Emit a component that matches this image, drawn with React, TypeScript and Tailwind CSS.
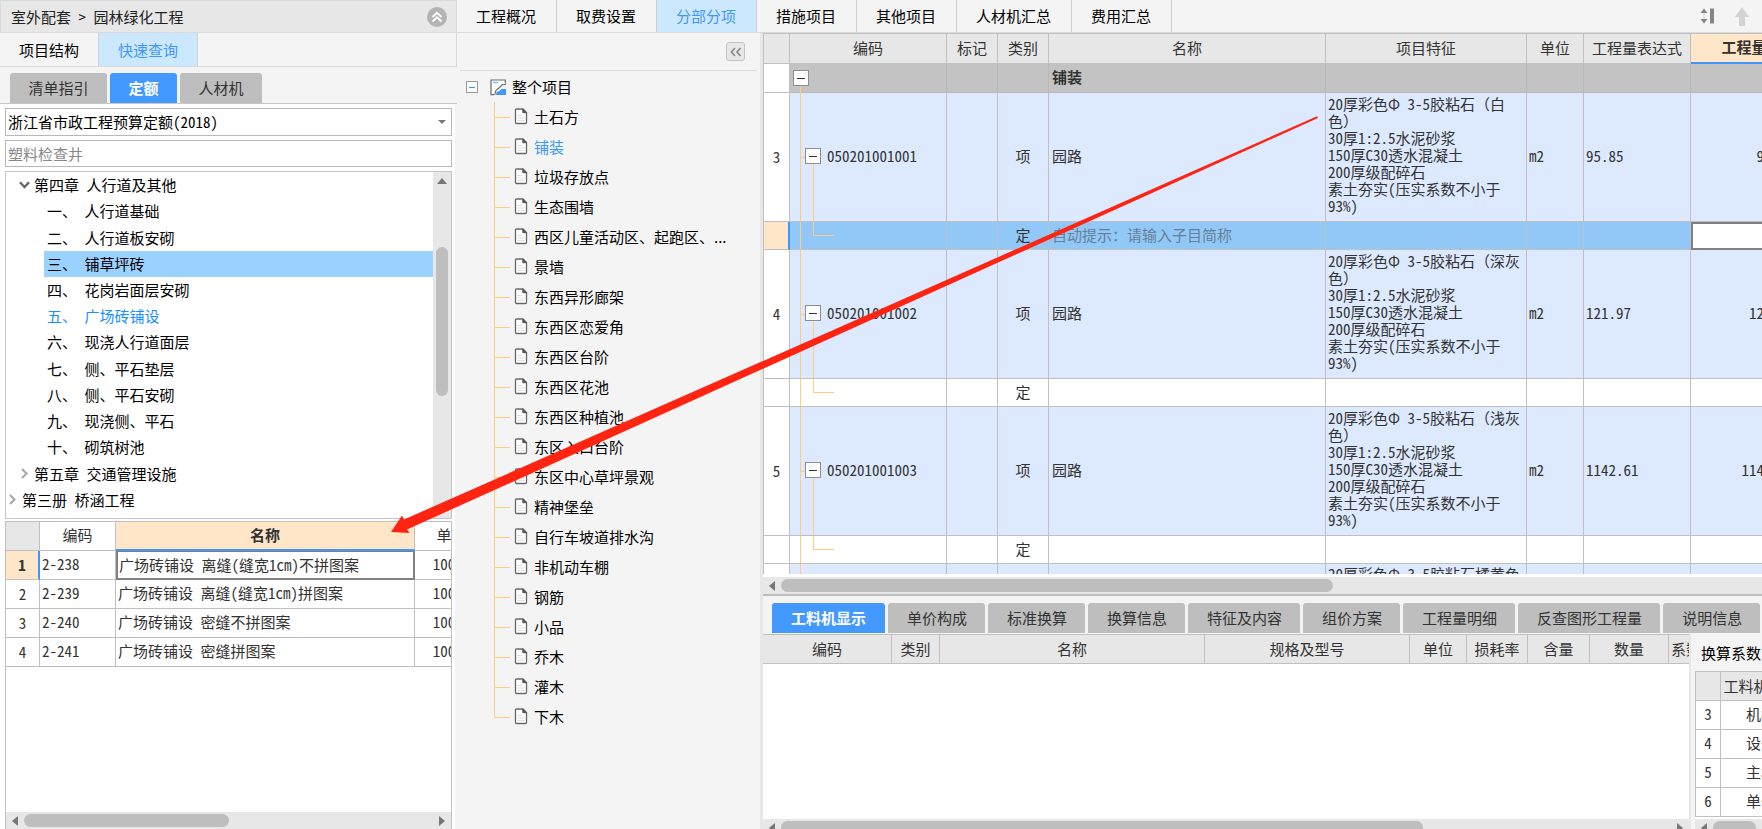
import React from "react";

const LINE = "border-[#c0c0c0]";

/* ---------- data ---------- */

const projectTabs = ["工程概况", "取费设置", "分部分项", "措施项目", "其他项目", "人材机汇总", "费用汇总"];

const chapterItems = [
  "一、 人行道基础",
  "二、 人行道板安砌",
  "三、 铺草坪砖",
  "四、 花岗岩面层安砌",
  "五、 广场砖铺设",
  "六、 现浇人行道面层",
  "七、 侧、平石垫层",
  "八、 侧、平石安砌",
  "九、 现浇侧、平石",
  "十、 砌筑树池",
];

const quotaRows = [
  ["2-238", "广场砖铺设 离缝(缝宽1cm)不拼图案"],
  ["2-239", "广场砖铺设 离缝(缝宽1cm)拼图案"],
  ["2-240", "广场砖铺设 密缝不拼图案"],
  ["2-241", "广场砖铺设 密缝拼图案"],
];

const sections = [
  "土石方", "铺装", "垃圾存放点", "生态围墙", "西区儿童活动区、起跑区、...", "景墙", "东西异形廊架",
  "东西区恋爱角", "东西区台阶", "东西区花池", "东西区种植池", "东区入口台阶", "东区中心草坪景观", "精神堡垒",
  "自行车坡道排水沟", "非机动车棚", "钢筋", "小品", "乔木", "灌木", "下木",
];

const feature = (color: string) =>
  `20厚彩色Φ 3-5胶粘石（${color}色）\n30厚1:2.5水泥砂浆\n150厚C30透水混凝土\n200厚级配碎石\n素土夯实(压实系数不小于93%)`;

const billItems = [
  { no: 3, code: "050201001001", feature: feature("白"), qty: "95.85", hint: true },
  { no: 4, code: "050201001002", feature: feature("深灰"), qty: "121.97", hint: false },
  { no: 5, code: "050201001003", feature: feature("浅灰"), qty: "1142.61", hint: false },
];

const detailTabs = [
  "工料机显示", "单价构成", "标准换算", "换算信息", "特征及内容", "组价方案", "工程量明细", "反查图形工程量", "说明信息",
];

const factorRows = [
  [3, "机械"],
  [4, "设备"],
  [5, "主材"],
  [6, "单价"],
] as const;

/* ---------- small parts ---------- */

function ArrowLeft() {
  return (
    <svg width="6" height="10" viewBox="0 0 6 10" fill="#75757a" aria-hidden="true">
      <path d="M6 0v10L0 5z" />
    </svg>
  );
}

function ArrowRight() {
  return (
    <svg width="6" height="10" viewBox="0 0 6 10" fill="#75757a" aria-hidden="true">
      <path d="M0 0v10l6-5z" />
    </svg>
  );
}

function HScroll({ thumb, right = true }: { thumb: string; right?: boolean }) {
  return (
    <div className="flex h-[17px] shrink-0 items-center gap-[6px] bg-[#e7e7e7] px-[6px]">
      <ArrowLeft />
      <div className="flex min-w-0 flex-1">
        <div className={`h-[13px] rounded-full bg-[#bebebe] ${thumb}`} />
      </div>
      {right && <ArrowRight />}
    </div>
  );
}

function DocIcon() {
  return (
    <svg width="14" height="17" viewBox="0 0 14 17" fill="none" aria-hidden="true">
      <path d="M1.500 2.200Q1.500 1 2.700 1H9L12.500 4.500V14.300Q12.500 15.500 11.300 15.500H2.700Q1.500 15.500 1.500 14.300Z" fill="#fff" stroke="#686868" strokeWidth="1.300" />
      <path d="M8.800 1L12.500 4.700H8.800Z" fill="#555" stroke="#555" />
      <path d="M3.500 7.500H8M3.500 10H10.500M3.500 12.500H10.500" stroke="#dedede" />
    </svg>
  );
}

function ProjectIcon() {
  return (
    <svg width="17" height="17" viewBox="0 0 17 17" fill="none" aria-hidden="true">
      <path d="M1 1H15.500V5L9.500 8L6 11.500L5 16H1Z" fill="#fff" />
      <path d="M15.300 4.500V1H1V15.700H4.500" stroke="#6b6b6b" strokeWidth="1.200" />
      <path d="M3 3.500H8" stroke="#79c3ff" strokeWidth="1.600" />
      <path d="M16 5.500H12.500L9.500 8.500L5.800 11.500L4.800 15.500" stroke="#6b6b6b" strokeWidth="1.100" />
      <path d="M6.500 13L9.500 12L11.500 10H16V16H6Z" fill="#3f97fb" />
    </svg>
  );
}

function Toggle() {
  return (
    <button type="button" aria-label="折叠" className="relative flex size-4 shrink-0 items-center justify-center border border-[#8e8e8e] bg-white">
      <span className="h-px w-2 bg-[#333]" />
    </button>
  );
}

/* ---------- left panel ---------- */

function QuotaTree() {
  const row = "flex w-full items-center text-left";
  return (
    <div className="flex h-[348px] shrink-0 border border-[#c4c4c4] bg-white">
      <ul className="grid min-w-0 flex-1 auto-rows-fr pb-[5px] text-black">
        <li className="flex">
          <button type="button" className={`${row} gap-1 pl-[13px]`}>
            <svg width="11" height="8" viewBox="0 0 11 8" fill="none" stroke="#666" strokeWidth="2.400" aria-hidden="true">
              <path d="M1 1.200L5.500 6L10 1.200" />
            </svg>
            第四章 人行道及其他
          </button>
        </li>
        {chapterItems.map((t, i) => (
          <li key={t} className="flex pl-[38px]">
            <button
              type="button"
              className={`${row} pl-[3px] ${i === 2 ? "bg-[#99d1ff]" : ""} ${i === 4 ? "text-[#1890ff]" : ""}`}
            >
              {t}
            </button>
          </li>
        ))}
        <li className="flex">
          <button type="button" className={`${row} gap-[6px] pl-[15px]`}>
            <svg width="7" height="11" viewBox="0 0 7 11" fill="none" stroke="#aaa" strokeWidth="2.200" aria-hidden="true">
              <path d="M1 1L5.500 5.500L1 10" />
            </svg>
            第五章 交通管理设施
          </button>
        </li>
        <li className="flex">
          <button type="button" className={`${row} gap-[6px] pl-[3px]`}>
            <svg width="7" height="11" viewBox="0 0 7 11" fill="none" stroke="#aaa" strokeWidth="2.200" aria-hidden="true">
              <path d="M1 1L5.500 5.500L1 10" />
            </svg>
            第三册 桥涵工程
          </button>
        </li>
      </ul>
      <div className="flex w-[18px] flex-col items-center bg-[#e7e7e7] pt-[6px]">
        <svg width="10" height="6" viewBox="0 0 10 6" fill="#75757a" aria-hidden="true">
          <path d="M0 6H10L5 0z" />
        </svg>
        <div className="mt-[63px] h-[149px] w-3 rounded-full bg-[#bebebe]" />
      </div>
    </div>
  );
}

function QuotaTable() {
  const cell = `border-r border-b pb-[2px] ${LINE}`;
  return (
    <div className="mt-[2px] flex min-h-0 flex-1 flex-col overflow-hidden border border-b-0 border-[#c0c0c0] bg-white">
      <div className="min-h-0 flex-1 overflow-hidden">
        <table className="w-[483px] table-fixed border-separate border-spacing-0 text-[#333]">
          <colgroup>
            <col className="w-[34px]" />
            <col className="w-[76px]" />
            <col className="w-[299px]" />
            <col className="w-[74px]" />
          </colgroup>
          <thead>
            <tr className="h-[29px]">
              <th className={`${cell} bg-[#e7e7e7]`} />
              <th className={`${cell} font-normal`}>编码</th>
              <th className="border-r border-b-2 border-r-[#c0c0c0] border-b-[#3f97fb] bg-[#ffe6c8] pb-px font-bold">名称</th>
              <th className={`${cell} font-normal`}>单位</th>
            </tr>
          </thead>
          <tbody>
            {quotaRows.map(([code, name], i) => (
              <tr key={code} className="h-[29px]">
                <td
                  className={
                    i === 0
                      ? "border-r-2 border-b border-r-[#3f97fb] border-b-[#c0c0c0] bg-[#ffe6c8] text-center font-bold"
                      : "border-r border-b border-[#c0c0c0] text-center"
                  }
                >
                  {i + 1}
                </td>
                <td className={`${cell} pl-[2px]`}>{code}</td>
                <td className={i === 0 ? "border-2 border-t border-[#808080] pb-px pl-px" : `${cell} pl-[2px]`}>{name}</td>
                <td className={`${cell} text-center`}>100m2</td>
              </tr>
            ))}
          </tbody>
        </table>
      </div>
      <HScroll thumb="w-[205px]" />
    </div>
  );
}

function LeftPanel() {
  const sub = "h-[30px] rounded-t-[3px]";
  return (
    <aside className="flex w-[457px] shrink-0 flex-col bg-[#f4f4f4]">
      <header className="flex h-[33px] shrink-0 items-center justify-between border border-[#dadada] bg-[#e7e7e7] pr-[9px] pl-[10px]">
        <h1>室外配套 &gt; 园林绿化工程</h1>
        <button type="button" aria-label="收起" className="flex size-5 items-center justify-center rounded-full bg-[#b4b4b4]">
          <svg width="12" height="12" viewBox="0 0 12 12" fill="none" stroke="#fff" strokeWidth="1.800" aria-hidden="true">
            <path d="M1.500 6L6 1.800L10.500 6M1.500 10.500L6 6.300L10.500 10.500" />
          </svg>
        </button>
      </header>
      <nav className="flex h-[34px] shrink-0 border-r border-b border-[#dadada]">
        <button type="button" className="w-[98px] text-black">项目结构</button>
        <button type="button" className="w-[100px] border-x border-[#cfcfcf] bg-[#cce8ff] text-[#3f97fb]">快速查询</button>
      </nav>
      <div className="flex h-[37px] shrink-0 items-end gap-[3px] border-b border-[#c8c8c8] pl-[10px] text-[#333]">
        <button type="button" className={`${sub} w-[97px] bg-[#bebebe]`}>清单指引</button>
        <button type="button" className={`${sub} w-[67px] bg-[#4399ff] font-bold text-white`}>定额</button>
        <button type="button" className={`${sub} w-[82px] bg-[#bebebe]`}>人材机</button>
      </div>
      <div className="mr-[2px] flex min-h-0 flex-1 flex-col bg-white px-[3px] pt-1 pl-[5px]">
        <div className="relative mb-1 flex h-7 shrink-0">
          <select aria-label="定额库" className="w-full appearance-none border border-[#b8b8b8] bg-white pl-[2px] text-black">
            <option>浙江省市政工程预算定额(2018)</option>
          </select>
          <svg className="pointer-events-none absolute top-3 right-[6px]" width="8" height="4" viewBox="0 0 8 4" fill="#777" aria-hidden="true">
            <path d="M0 0H8L4 4z" />
          </svg>
        </div>
        <input
          aria-label="查询"
          placeholder="塑料检查井"
          className="mb-1 h-[27px] shrink-0 border border-[#b8b8b8] bg-white pl-[2px] placeholder:text-[#888]"
        />
        <QuotaTree />
        <QuotaTable />
      </div>
    </aside>
  );
}

/* ---------- section tree ---------- */

function SectionTree() {
  return (
    <section className="flex w-[303px] shrink-0 flex-col pr-[3px] pl-[3px] font-['Noto_Sans_CJK_SC',sans-serif]">
      <div className="flex h-[38px] shrink-0 items-center justify-end border-b border-[#dcdcdc] pr-3">
        <button type="button" aria-label="收起" className="flex size-[19px] items-center justify-center rounded-[3px] border border-[#c4c4c4] bg-[#e7e7e7]">
          <svg width="12" height="10" viewBox="0 0 12 10" fill="none" stroke="#888" strokeWidth="1.600" aria-hidden="true">
            <path d="M5 1L1.500 5L5 9M10.500 1L7 5L10.500 9" />
          </svg>
        </button>
      </div>
      <div className="mt-px flex h-[30px] items-center text-black">
        <button type="button" aria-label="折叠" className="ml-[6px] flex size-3 items-center justify-center border border-[#999] bg-white">
          <span className="h-px w-[6px] bg-[#1ea0e8]" />
        </button>
        <span className="mr-[5px] ml-[12px]">
          <ProjectIcon />
        </span>
        整个项目
      </div>
      <ul className="text-black">
        {sections.map((t, i) => (
          <li key={t} className="relative flex h-[30px] items-center pl-[34px]">
            <span className={`absolute top-0 left-[34px] w-px bg-[#ffcc80] ${i === sections.length - 1 ? "h-[15px]" : "h-full"}`} />
            <span className="h-px w-4 bg-[#ffcc80]" />
            <span className="mr-[6px] ml-1 pb-[2px]">
              <DocIcon />
            </span>
            <button type="button" className={`whitespace-nowrap ${i === 1 ? "text-[#3f97fb]" : ""}`}>{t}</button>
          </li>
        ))}
      </ul>
    </section>
  );
}

/* ---------- bill table ---------- */

function BillTable() {
  const line = `border-r border-b ${LINE}`;
  const cell = `${line} pb-[2px]`;
  const group = "border-r border-b border-[#b8b8b8]";
  const spine = <span className="absolute top-0 left-[10px] h-full w-px bg-[#ffcc80]" />;
  return (
    <div className="h-[541px] shrink-0 overflow-hidden border-t border-l border-[#c0c0c0] bg-white">
      <table className="w-[1033px] table-fixed border-separate border-spacing-0 text-[#333]">
        <colgroup>
          <col className="w-[26px]" />
          <col className="w-[157px]" />
          <col className="w-[51px]" />
          <col className="w-[51px]" />
          <col className="w-[277px]" />
          <col className="w-[201px]" />
          <col className="w-[57px]" />
          <col className="w-[107px]" />
          <col className="w-[106px]" />
        </colgroup>
        <thead>
          <tr className="h-[30px] bg-[#e7e7e7]">
            <th className={cell} />
            {["编码", "标记", "类别", "名称", "项目特征", "单位", "工程量表达式"].map((h) => (
              <th key={h} className={`${cell} font-normal whitespace-nowrap`}>{h}</th>
            ))}
            <th className="border-b-2 border-[#3f97fb] bg-[#ffe6c8] pb-[2px] font-bold">工程量</th>
          </tr>
        </thead>
        <tbody>
          <tr className="h-[29px] bg-[#c3c3c3]">
            <td className={`${line} bg-white`} />
            <td className={`${group} relative pl-[3px]`}>
              <span className="absolute top-[20px] left-[10px] h-[9px] w-px bg-[#ffcc80]" />
              <Toggle />
            </td>
            <td className={group} />
            <td className={group} />
            <td className={`${group} pb-[2px] pl-[3px] font-bold`}>铺装</td>
            <td className={group} />
            <td className={group} />
            <td className={group} />
            <td className={group} />
          </tr>
          {billItems.map((b) => (
            <React.Fragment key={b.no}>
              <tr className="h-[129px] bg-[#dde9fe]">
                <td className={`${line} bg-white text-center`}>{b.no}</td>
                <td className={`${cell} relative`}>
                  {spine}
                  <span className="absolute top-1/2 left-[10px] h-px w-[5px] bg-[#ffcc80]" />
                  <span className="absolute top-1/2 left-[23px] h-1/2 w-px bg-[#ffcc80]" />
                  <div className="flex items-center gap-[6px] pl-[15px]">
                    <Toggle />
                    {b.code}
                  </div>
                </td>
                <td className={cell} />
                <td className={`${cell} text-center`}>项</td>
                <td className={`${cell} pl-[3px]`}>园路</td>
                <td className={`${line} pr-1 pb-[5px] pl-[2px] leading-[17px] whitespace-pre-line`}>{b.feature}</td>
                <td className={`${cell} pl-[2px]`}>m2</td>
                <td className={`${cell} pl-[2px]`}>{b.qty}</td>
                <td className={`${cell} pr-[2px] text-right`}>{b.qty}</td>
              </tr>
              <tr className={`h-[28px] ${b.hint ? "bg-[#92c8f7]" : "bg-white"}`}>
                <td
                  className={
                    b.hint ? "border-r-2 border-b border-r-[#3f97fb] border-b-[#c0c0c0] bg-[#ffe6c8]" : line
                  }
                />
                <td className={`${line} relative`}>
                  {spine}
                  <span className="absolute top-0 left-[23px] h-[14px] w-[21px] border-b border-l border-[#ffcc80]" />
                </td>
                <td className={line} />
                <td className={`${cell} text-center`}>定</td>
                <td className={`${cell} pl-[3px] text-[#66809a]`}>{b.hint ? "自动提示：请输入子目简称" : ""}</td>
                <td className={line} />
                <td className={line} />
                <td className={line} />
                <td className={b.hint ? "border-2 border-[#808080] bg-white" : line} />
              </tr>
            </React.Fragment>
          ))}
          <tr className="h-[129px] bg-[#dde9fe]">
            <td className={`${line} bg-white`} />
            <td className={`${line} relative`}>{spine}</td>
            <td className={line} />
            <td className={line} />
            <td className={line} />
            <td className={`${line} pt-px pl-[2px] align-top leading-[17px]`}>20厚彩色Φ 3-5胶粘石橘黄色</td>
            <td className={line} />
            <td className={line} />
            <td className={line} />
          </tr>
        </tbody>
      </table>
    </div>
  );
}

/* ---------- lower detail area ---------- */

function DetailArea() {
  const cell = `border-r border-b ${LINE}`;
  return (
    <div className="flex min-h-0 flex-1 flex-col">
      <div className="flex h-[38px] shrink-0 items-start gap-[3px] overflow-hidden pt-[7px] pl-[9px] text-[#333]">
        {detailTabs.map((t, i) => (
          <button
            key={t}
            type="button"
            className={`h-[30px] shrink-0 rounded-t-[3px] pl-[19px] whitespace-nowrap ${
              i === 0 ? "bg-[#4399ff] pr-[19px] font-bold text-white" : "bg-[#bebebe] pr-[18px]"
            }`}
          >
            {t}
          </button>
        ))}
      </div>
      <div className="flex min-h-0 flex-1">
        <div className="flex min-w-0 flex-1 flex-col overflow-hidden bg-white">
          <div className="min-h-0 flex-1 overflow-hidden">
            <table className="w-[966px] table-fixed border-separate border-spacing-0 border-t border-[#c0c0c0] text-[#333]">
              <colgroup>
                <col className="w-[129px]" />
                <col className="w-[48px]" />
                <col className="w-[265px]" />
                <col className="w-[205px]" />
                <col className="w-[57px]" />
                <col className="w-[61px]" />
                <col className="w-[62px]" />
                <col className="w-[79px]" />
                <col className="w-[60px]" />
              </colgroup>
              <thead>
                <tr className="h-[29px] bg-[#e7e7e7]">
                  {["编码", "类别", "名称", "规格及型号", "单位", "损耗率", "含量", "数量"].map((h) => (
                    <th key={h} className={`${cell} font-normal whitespace-nowrap`}>{h}</th>
                  ))}
                  <th className={`${cell} pl-[2px] text-left font-normal`}>系数</th>
                </tr>
              </thead>
            </table>
          </div>
          <div className="h-[10px] shrink-0 overflow-hidden">
            <HScroll thumb="w-[642px]" />
          </div>
        </div>
        <aside className="flex w-[73px] shrink-0 flex-col overflow-hidden border-l-2 border-[#e7e7e7] bg-[#f4f4f4] pl-1">
          <h2 className="flex h-[37px] shrink-0 items-center pl-[6px] whitespace-nowrap text-black">换算系数</h2>
          <div className="min-h-0 flex-1 overflow-hidden bg-white">
            <table className="w-[106px] table-fixed border-separate border-spacing-0 border-t border-l border-[#c0c0c0] text-[#333]">
              <colgroup>
                <col className="w-[25px]" />
                <col className="w-[81px]" />
              </colgroup>
              <thead>
                <tr className="h-[29px] bg-[#e7e7e7]">
                  <th className={cell} />
                  <th className={`${cell} font-normal whitespace-nowrap`}>工料机类别</th>
                </tr>
              </thead>
              <tbody>
                {factorRows.map(([n, t]) => (
                  <tr key={n} className="h-[29px]">
                    <td className={`${cell} pb-[2px] text-center`}>{n}</td>
                    <td className={`${cell} pb-[2px] text-center`}>{t}</td>
                  </tr>
                ))}
              </tbody>
            </table>
          </div>
          <div className="h-[10px] shrink-0 overflow-hidden">
            <HScroll thumb="w-full" right={false} />
          </div>
        </aside>
      </div>
    </div>
  );
}

/* ---------- page ---------- */

export default function App() {
  return (
    <div className="relative flex h-screen overflow-hidden bg-[#f4f4f4] font-['Noto_Sans_Mono_CJK_SC','Noto_Sans_CJK_SC',sans-serif] text-[15px] leading-5 text-[#222]">
      <LeftPanel />
      <main className="flex min-w-0 flex-1 flex-col">
        <div className="flex h-[33px] shrink-0 items-stretch border-b border-[#dadada]">
          <nav className="flex">
            {projectTabs.map((t, i) => (
              <button
                key={t}
                type="button"
                className={`border-r border-[#cfcfcf] pr-5 pl-[19px] whitespace-nowrap ${i === 2 ? "bg-[#cce8ff] text-[#3f97fb]" : "text-black"}`}
              >
                {t}
              </button>
            ))}
          </nav>
          <div className="ml-auto flex items-center gap-5 pr-[13px]">
            <button type="button" aria-label="调整行高">
              <svg width="15" height="16" viewBox="0 0 15 16" fill="#858585" aria-hidden="true">
                <path d="M0.500 5L4 0.500L7.500 5ZM0.500 11L4 15.500L7.500 11Z" />
                <path d="M3.300 5.500H4.700V7.300H3.300ZM3.300 8.700H4.700V10.500H3.300Z" opacity="0.400" />
                <path d="M10 0.500H14V15.500H10Z" />
              </svg>
            </button>
            <button type="button" aria-label="上移">
              <svg width="14" height="19" viewBox="0 0 14 19" fill="#d3d3d3" aria-hidden="true">
                <path d="M7 0L14 10H10V19H4V10H0Z" />
              </svg>
            </button>
          </div>
        </div>
        <div className="flex min-h-0 flex-1">
          <SectionTree />
          <div className="flex min-w-0 flex-1 flex-col border-l-[3px] border-[#e7e7e7]">
            <BillTable />
            <div className="shrink-0 border-t-[3px] border-b-2 border-t-white border-b-[#bcbcbc]">
              <HScroll thumb="w-[552px]" right={false} />
            </div>
            <DetailArea />
          </div>
        </div>
      </main>
      <svg className="pointer-events-none absolute top-0 left-0" width="1762" height="829" viewBox="0 0 1762 829" fill="#ff2412" aria-hidden="true">
        <path d="M1317 116.300L404 519.500L402 515.500L391 532L409.500 533L407 529.500L1318 118Z" />
      </svg>
    </div>
  );
}
